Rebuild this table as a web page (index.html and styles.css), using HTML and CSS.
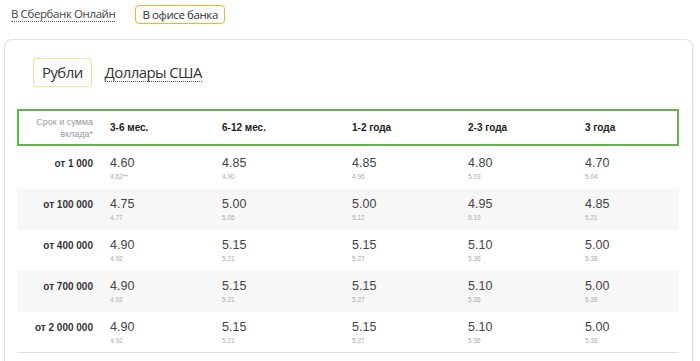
FILE: index.html
```html
<!DOCTYPE html>
<html lang="ru">
<head>
<meta charset="utf-8">
<link rel="stylesheet" href="styles.css">
</head>
<body>
<div class="top-tabs">
  <span class="top-link">В Сбербанк Онлайн</span>
  <span class="top-active">В офисе банка</span>
</div>
<div class="card">
  <div class="cur-tabs">
    <span class="cur-active">Рубли</span>
    <span class="cur-link">Доллары США</span>
  </div>
  <div class="table">
    <div class="head">
      <div class="lbl head-lbl">Срок и сумма<br>вклада*</div>
      <div class="hc">3-6 мес.</div>
      <div class="hc">6-12 мес.</div>
      <div class="hc">1-2 года</div>
      <div class="hc">2-3 года</div>
      <div class="hc">3 года</div>
    </div>
    <div class="row">
      <div class="lbl">от 1 000</div>
      <div class="c"><div class="v">4.60</div><div class="s">4.62**</div></div>
      <div class="c"><div class="v">4.85</div><div class="s">4.90</div></div>
      <div class="c"><div class="v">4.85</div><div class="s">4.96</div></div>
      <div class="c"><div class="v">4.80</div><div class="s">5.03</div></div>
      <div class="c"><div class="v">4.70</div><div class="s">5.04</div></div>
    </div>
    <div class="row alt">
      <div class="lbl">от 100 000</div>
      <div class="c"><div class="v">4.75</div><div class="s">4.77</div></div>
      <div class="c"><div class="v">5.00</div><div class="s">5.05</div></div>
      <div class="c"><div class="v">5.00</div><div class="s">5.12</div></div>
      <div class="c"><div class="v">4.95</div><div class="s">5.19</div></div>
      <div class="c"><div class="v">4.85</div><div class="s">5.21</div></div>
    </div>
    <div class="row">
      <div class="lbl">от 400 000</div>
      <div class="c"><div class="v">4.90</div><div class="s">4.92</div></div>
      <div class="c"><div class="v">5.15</div><div class="s">5.21</div></div>
      <div class="c"><div class="v">5.15</div><div class="s">5.27</div></div>
      <div class="c"><div class="v">5.10</div><div class="s">5.36</div></div>
      <div class="c"><div class="v">5.00</div><div class="s">5.38</div></div>
    </div>
    <div class="row alt">
      <div class="lbl">от 700 000</div>
      <div class="c"><div class="v">4.90</div><div class="s">4.92</div></div>
      <div class="c"><div class="v">5.15</div><div class="s">5.21</div></div>
      <div class="c"><div class="v">5.15</div><div class="s">5.27</div></div>
      <div class="c"><div class="v">5.10</div><div class="s">5.36</div></div>
      <div class="c"><div class="v">5.00</div><div class="s">5.38</div></div>
    </div>
    <div class="row last">
      <div class="lbl">от 2 000 000</div>
      <div class="c"><div class="v">4.90</div><div class="s">4.92</div></div>
      <div class="c"><div class="v">5.15</div><div class="s">5.21</div></div>
      <div class="c"><div class="v">5.15</div><div class="s">5.27</div></div>
      <div class="c"><div class="v">5.10</div><div class="s">5.36</div></div>
      <div class="c"><div class="v">5.00</div><div class="s">5.38</div></div>
    </div>
  </div>
</div>
</body>
</html>
```
FILE: styles.css
```css
html, body {
  margin: 0;
  padding: 0;
  background: #fff;
  overflow: hidden;
}
body {
  width: 700px;
  height: 361px;
  font-family: "Open Sans", "Liberation Sans", sans-serif;
  color: #333;
}
.top-tabs {
  display: flex;
  align-items: center;
  height: 29px;
  padding: 0 0 0 11px;
  gap: 20px;
  font-size: 11.5px;
  letter-spacing: -0.4px;
}
.top-link {
  color: #444;
  line-height: 14px;
  border-bottom: 1px dotted #666;
}
.top-active {
  border: 1.5px solid #efb42c;
  border-radius: 4px;
  padding: 1px 6px 1px 6px;
  line-height: 15px;
  color: #333;
}
.card {
  margin: 10px 7px 0 4px;
  height: 340px;
  border: 1px solid #e2e2e2;
  border-bottom: none;
  border-radius: 8px 8px 0 0;
  box-shadow: 2px 0 0 -1px #f0f0f0;
  padding: 18px 13px 0 12px;
  box-sizing: border-box;
}
.cur-tabs {
  display: flex;
  align-items: center;
  gap: 13px;
  padding-left: 16px;
  font-size: 15px;
  letter-spacing: -0.6px;
}
.cur-active {
  border: 1px solid #f3df9a;
  border-radius: 3px;
  padding: 3px 8px;
  line-height: 21px;
  color: #333;
  box-shadow: 0 1px 1px rgba(240, 200, 80, 0.15);
}
.cur-link {
  line-height: 18px;
  border-bottom: 1px dotted #555;
  color: #333;
}
.table {
  margin-top: 22px;
  font-family: "Liberation Sans", Arial, sans-serif;
}
.head, .row {
  display: grid;
  grid-template-columns: 93px 112px 130px 116px 117px 1fr;
}
.head {
  grid-template-columns: 91px 112px 130px 116px 117px 1fr;
  height: 37px;
  box-sizing: border-box;
  border: 2px solid #5cb848;
  align-items: center;
  margin-bottom: 2px;
}
.lbl {
  text-align: right;
  padding-right: 17px;
  font-size: 10px;
  font-weight: bold;
  color: #333;
  line-height: 15px;
}
.head-lbl {
  font-weight: normal;
  font-size: 9px;
  line-height: 12px;
  color: #9a9a9a;
}
.hc {
  font-size: 10px;
  font-weight: bold;
  color: #222;
}
.row {
  height: 41px;
  box-sizing: border-box;
  padding-top: 8px;
}
.row.alt {
  background: #f7f7f7;
}
.row.last {
  border-bottom: 1px solid #dedede;
}
.v {
  font-size: 12.5px;
  line-height: 15px;
  color: #444;
}
.s {
  font-size: 6.5px;
  line-height: 8px;
  margin-top: 2px;
  color: #aaa;
}
```
